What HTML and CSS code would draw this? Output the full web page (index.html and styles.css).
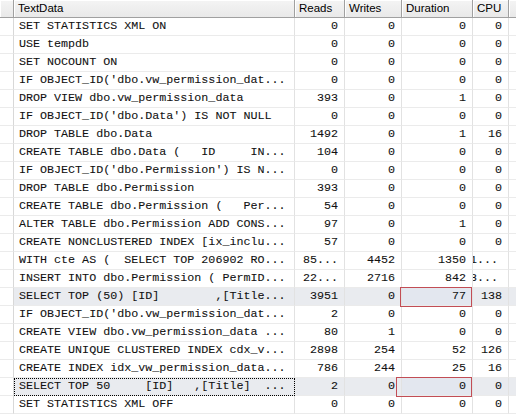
FILE: index.html
```html
<!DOCTYPE html>
<html>
<head>
<meta charset="utf-8">
<link rel="stylesheet" href="styles.css">
</head>
<body>
<div class="grid">
<table class="tbl">
<colgroup><col class="c0"><col class="c1"><col class="c2"><col class="c3"><col class="c4"><col class="c5"><col class="c6"></colgroup>
<thead>
<tr><th class="rh"></th><th>TextData</th><th>Reads</th><th>Writes</th><th>Duration</th><th>CPU</th><th class="more"></th></tr>
</thead>
<tbody>
<tr><td class="rh"></td><td class="txt">SET STATISTICS XML ON</td><td class="n">0</td><td class="n">0</td><td class="n">0</td><td class="n">0</td><td></td></tr>
<tr><td class="rh"></td><td class="txt">USE tempdb</td><td class="n">0</td><td class="n">0</td><td class="n">0</td><td class="n">0</td><td></td></tr>
<tr><td class="rh"></td><td class="txt">SET NOCOUNT ON</td><td class="n">0</td><td class="n">0</td><td class="n">0</td><td class="n">0</td><td></td></tr>
<tr><td class="rh"></td><td class="txt">IF OBJECT_ID('dbo.vw_permission_dat...</td><td class="n">0</td><td class="n">0</td><td class="n">0</td><td class="n">0</td><td></td></tr>
<tr><td class="rh"></td><td class="txt">DROP VIEW dbo.vw_permission_data</td><td class="n">393</td><td class="n">0</td><td class="n">1</td><td class="n">0</td><td></td></tr>
<tr><td class="rh"></td><td class="txt">IF OBJECT_ID('dbo.Data') IS NOT NULL</td><td class="n">0</td><td class="n">0</td><td class="n">0</td><td class="n">0</td><td></td></tr>
<tr><td class="rh"></td><td class="txt">DROP TABLE dbo.Data</td><td class="n">1492</td><td class="n">0</td><td class="n">1</td><td class="n">16</td><td></td></tr>
<tr><td class="rh"></td><td class="txt">CREATE TABLE dbo.Data (   ID     IN...</td><td class="n">104</td><td class="n">0</td><td class="n">0</td><td class="n">0</td><td></td></tr>
<tr><td class="rh"></td><td class="txt">IF OBJECT_ID('dbo.Permission') IS N...</td><td class="n">0</td><td class="n">0</td><td class="n">0</td><td class="n">0</td><td></td></tr>
<tr><td class="rh"></td><td class="txt">DROP TABLE dbo.Permission</td><td class="n">393</td><td class="n">0</td><td class="n">0</td><td class="n">0</td><td></td></tr>
<tr><td class="rh"></td><td class="txt">CREATE TABLE dbo.Permission (   Per...</td><td class="n">54</td><td class="n">0</td><td class="n">0</td><td class="n">0</td><td></td></tr>
<tr><td class="rh"></td><td class="txt">ALTER TABLE dbo.Permission ADD CONS...</td><td class="n">97</td><td class="n">0</td><td class="n">1</td><td class="n">0</td><td></td></tr>
<tr><td class="rh"></td><td class="txt">CREATE NONCLUSTERED INDEX [ix_inclu...</td><td class="n">57</td><td class="n">0</td><td class="n">0</td><td class="n">0</td><td></td></tr>
<tr><td class="rh"></td><td class="txt">WITH cte AS (  SELECT TOP 206902 RO...</td><td class="n">85...</td><td class="n">4452</td><td class="n">1350</td><td class="clip">1...</td><td></td></tr>
<tr><td class="rh"></td><td class="txt">INSERT INTO dbo.Permission ( PermID...</td><td class="n">22...</td><td class="n">2716</td><td class="n">842</td><td class="clip">3...</td><td></td></tr>
<tr class="sel"><td class="rh"></td><td class="txt">SELECT TOP (50) [ID]        ,[Title...</td><td class="n">3951</td><td class="n">0</td><td class="n hot">77</td><td class="n">138</td><td></td></tr>
<tr><td class="rh"></td><td class="txt">IF OBJECT_ID('dbo.vw_permission_dat...</td><td class="n">2</td><td class="n">0</td><td class="n">0</td><td class="n">0</td><td></td></tr>
<tr><td class="rh"></td><td class="txt">CREATE VIEW dbo.vw_permission_data ...</td><td class="n">80</td><td class="n">1</td><td class="n">0</td><td class="n">0</td><td></td></tr>
<tr><td class="rh"></td><td class="txt">CREATE UNIQUE CLUSTERED INDEX cdx_v...</td><td class="n">2898</td><td class="n">254</td><td class="n">52</td><td class="n">126</td><td></td></tr>
<tr><td class="rh"></td><td class="txt">CREATE INDEX idx_vw_permission_data...</td><td class="n">786</td><td class="n">244</td><td class="n">25</td><td class="n">16</td><td></td></tr>
<tr class="sel"><td class="rh"></td><td class="txt focus">SELECT TOP 50     [ID]   ,[Title]  ...</td><td class="n">2</td><td class="n">0</td><td class="n hot">0</td><td class="n">0</td><td></td></tr>
<tr><td class="rh"></td><td class="txt">SET STATISTICS XML OFF</td><td class="n">0</td><td class="n">0</td><td class="n">0</td><td class="n">0</td><td></td></tr>
</tbody>
</table>
<div class="mark mark-a"></div>
<div class="mark mark-b"></div>
</div>
</body>
</html>
```

FILE: styles.css
```css
html, body {
  margin: 0;
  padding: 0;
  background: #ffffff;
}
.grid {
  position: relative;
  width: 516px;
  height: 419px;
  overflow: hidden;
}
.tbl {
  table-layout: fixed;
  border-collapse: separate;
  border-spacing: 0;
  width: 569px;
}
.c0 { width: 14px; }
.c1 { width: 281px; }
.c2 { width: 50px; }
.c3 { width: 57px; }
.c4 { width: 71px; }
.c5 { width: 36px; }
.c6 { width: 60px; }
.tbl th {
  height: 17px;
  padding: 0 0 0 4px;
  font-family: "Liberation Sans", Arial, sans-serif;
  font-size: 11.5px;
  font-weight: normal;
  color: #000;
  text-align: left;
  line-height: 17px;
  background: linear-gradient(#f4f4f4, #e9e9e9);
  border-right: 1px solid #a0a0a0;
  border-bottom: 1px solid #a0a0a0;
  box-shadow: inset 1px 1px 0 #ffffff;
  white-space: nowrap;
  overflow: hidden;
}
.tbl th.rh {
  padding: 0;
}
.tbl td {
  height: 17px;
  padding: 0 6px 0 5px;
  font-family: "Liberation Mono", "Courier New", monospace;
  font-size: 11.7px;
  line-height: 17px;
  color: #111;
  -webkit-text-stroke: 0.08px #111;
  border-right: 1px solid #e2e2e2;
  border-bottom: 1px solid #ebebeb;
  white-space: pre;
  overflow: hidden;
}
.tbl td.rh {
  padding: 0;
  border-right-color: #d8d8d8;
}
.tbl td.n {
  text-align: right;
}
.tbl td.clip {
  padding: 0;
  text-indent: -3px;
  text-align: left;
}
.sel td {
  background: #e9ebef;
}
.sel td.rh {
  background: #ffffff;
}
.sel td.hot {
  background: #e3e7ef;
}
.tbl td.focus {
  outline: 1px dotted #000;
  outline-offset: -1px;
}
.mark {
  position: absolute;
  border: 1px solid #c24d55;
  box-sizing: border-box;
}
.mark-a {
  left: 400px;
  top: 287px;
  width: 72px;
  height: 20px;
}
.mark-b {
  left: 396px;
  top: 377px;
  width: 76px;
  height: 20px;
}
```
